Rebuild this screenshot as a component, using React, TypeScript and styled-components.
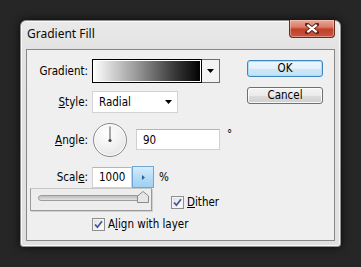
import styled, { createGlobalStyle } from 'styled-components';

const Global = createGlobalStyle`
  html, body { margin: 0; padding: 0; background: #262626; }
  body {
    width: 361px; height: 267px; overflow: hidden;
    font-family: "DejaVu Sans Condensed", "Liberation Sans", sans-serif;
    font-size: 11.5px; color: #000;
  }
`;

const Desktop = styled.div`
  padding: 20px 0 0 20px;
`;

const Window = styled.div`
  box-sizing: border-box;
  width: 321px;
  height: 227px;
  border: 1px solid #8f8f8f;
  border-radius: 6px 6px 3px 3px;
  background: linear-gradient(180deg, #eaeaea 0%, #e3e3e3 12%, #e0e0e0 100%);
  box-shadow: 0 0 10px rgba(0, 0, 0, 0.75), inset 0 0 0 1px rgba(255, 255, 255, 0.75);
  padding: 0 5px 5px;
  display: flex;
  flex-direction: column;
`;

const TitleBar = styled.div`
  height: 28px;
  display: flex;
  justify-content: space-between;
  align-items: flex-start;
`;

const Title = styled.div`
  margin: 5px 0 0 1px;
  font-family: "Noto Sans", "Open Sans", sans-serif;
  font-size: 12px;
  line-height: 16px;
  color: #0a0a0a;
`;

const CloseButton = styled.div`
  width: 46px;
  height: 18px;
  margin-top: -1px;
  box-sizing: border-box;
  border: 1px solid #6b2a1f;
  border-top: none;
  border-radius: 0 0 4px 4px;
  background: linear-gradient(180deg, #e9a89b 0%, #dc7d6a 40%, #c4402a 55%, #c65540 100%);
  box-shadow: inset 0 0 0 1px rgba(255, 220, 210, 0.45);
  display: flex;
  align-items: center;
  justify-content: center;
`;

const Frame = styled.div`
  flex: 1;
  border: 1px solid #888888;
  background: #efefef;
  display: flex;
  justify-content: space-between;
`;

const FormColumn = styled.div`
  display: flex;
  flex-direction: column;
`;

const Row = styled.div<{ $mt: number; $h?: number }>`
  display: flex;
  align-items: center;
  margin-top: ${(p) => p.$mt}px;
  height: ${(p) => (p.$h ? `${p.$h}px` : 'auto')};
`;

const Label = styled.div`
  width: 61px;
  margin-right: 4px;
  text-align: right;
  white-space: nowrap;
`;

const Key = styled.span`
  text-decoration: underline;
  text-underline-offset: 1px;
`;

const GradientPicker = styled.div`
  display: flex;
  width: 128px;
  height: 24px;
`;

const Swatch = styled.div`
  flex: 1;
  box-sizing: border-box;
  border: 1px solid #000;
  box-shadow: inset 0 0 0 1px #fff;
  background: linear-gradient(90deg, #ffffff 0%, #9a9a9a 40%, #3a3a3a 75%, #000000 100%);
`;

const PickerArrow = styled.div`
  width: 18px;
  box-sizing: border-box;
  border: 1px solid #6e6e6e;
  border-left: none;
  background: #f3f3f3;
  display: flex;
  align-items: center;
  justify-content: center;
`;

const Select = styled.div`
  box-sizing: border-box;
  width: 86px;
  height: 22px;
  border: 1px solid #d3d3d3;
  background: #fff;
  display: flex;
  align-items: center;
  justify-content: space-between;
  padding: 0 5px 0 6px;
`;

const Dial = styled.div`
  box-sizing: border-box;
  width: 34px;
  height: 34px;
  margin-left: 1px;
  border-radius: 50%;
  border: 1px solid #8a8a8a;
  background: radial-gradient(circle at 40% 30%, #ffffff 0%, #f2f2f2 45%, #dedede 100%);
  box-shadow: inset 0 0 0 1px rgba(255, 255, 255, 0.9);
`;

const TextInput = styled.div<{ $w: number; $ml?: number }>`
  box-sizing: border-box;
  width: ${(p) => p.$w}px;
  height: 21px;
  margin-left: ${(p) => p.$ml ?? 0}px;
  border: 1px solid #d0d0d0;
  border-top-color: #b5b5b5;
  background: #fff;
  display: flex;
  align-items: center;
  padding-left: 6px;
`;

const Unit = styled.div<{ $ml: number; $up?: boolean }>`
  margin-left: ${(p) => p.$ml}px;
  align-self: ${(p) => (p.$up ? 'flex-start' : 'center')};
  margin-top: ${(p) => (p.$up ? '5px' : '0')};
`;

const StepButton = styled.div`
  box-sizing: border-box;
  width: 22px;
  height: 22px;
  border: 1px solid #6fa6d3;
  background: linear-gradient(180deg, #d6ecfb 0%, #b5dcf7 50%, #9fd0f4 100%);
  display: flex;
  align-items: center;
  justify-content: center;
`;

const SliderRow = styled.div`
  display: flex;
  align-items: flex-end;
`;

const SliderPopup = styled.div`
  box-sizing: border-box;
  width: 122px;
  height: 23px;
  margin-left: 3px;
  border: 1px solid #9a9a9a;
  border-top-color: #c8c8c8;
  background: #ededed;
  box-shadow: 1px 1px 0 #cfcfcf;
  display: flex;
  align-items: center;
  padding-left: 7px;
`;

const Track = styled.div`
  position: relative;
  width: 109px;
  height: 4px;
  margin-top: -4px;
  border: 1px solid #9c9c9c;
  border-radius: 3px;
  background: linear-gradient(180deg, #bdbdbd, #e2e2e2);
`;

const Thumb = styled.svg`
  position: absolute;
  right: -1px;
  top: -5px;
`;

const Check = styled.label<{ $ml: number; $mb?: number }>`
  display: flex;
  align-items: center;
  gap: 3px;
  margin-left: ${(p) => p.$ml}px;
  margin-bottom: ${(p) => p.$mb ?? 0}px;
  white-space: nowrap;
`;

const Box = styled.div`
  box-sizing: border-box;
  width: 13px;
  height: 13px;
  border: 1px solid #8e8f8f;
  background: linear-gradient(135deg, #dcdcdc 0%, #f4f4f4 60%, #ffffff 100%);
  box-shadow: inset 0 0 0 1px #f4f4f4;
  display: flex;
  align-items: center;
  justify-content: center;
`;

const ButtonColumn = styled.div`
  display: flex;
  flex-direction: column;
  gap: 10px;
  margin: 10px 11px 0 0;
`;

const Button = styled.div<{ $default?: boolean }>`
  box-sizing: border-box;
  width: 76px;
  height: 17px;
  border: 1px solid ${(p) => (p.$default ? '#3c87c0' : '#707070')};
  border-radius: 3px;
  background: ${(p) =>
    p.$default
      ? 'linear-gradient(180deg, #eef7fd 0%, #e2f1fb 50%, #cde8f8 51%, #c2e2f6 100%)'
      : 'linear-gradient(180deg, #f3f3f3 0%, #ebebeb 50%, #dddddd 51%, #cfcfcf 100%)'};
  box-shadow: inset 0 0 0 1px ${(p) => (p.$default ? '#a9dcf7' : 'rgba(255,255,255,0.8)')};
  display: flex;
  align-items: center;
  justify-content: center;
  line-height: 13px;
`;

const CheckMark = () => (
  <svg width="9" height="9" viewBox="0 0 9 9">
    <path d="M1 4.5 L3.4 7.2 L8 1.2" fill="none" stroke="#45589a" strokeWidth="1.8" />
  </svg>
);

const DownArrow = () => (
  <svg width="7" height="4" viewBox="0 0 7 4">
    <path d="M0 0 H7 L3.5 4 Z" fill="#000" />
  </svg>
);

export default function App() {
  return (
    <>
      <Global />
      <Desktop>
        <Window>
          <TitleBar>
            <Title>Gradient Fill</Title>
            <CloseButton>
              <svg width="14" height="11" viewBox="0 0 14 11">
                <path d="M2 1.5 L12 9.5 M12 1.5 L2 9.5" stroke="#5a2418" strokeWidth="4" strokeLinecap="square" />
                <path d="M2.3 1.8 L11.7 9.2 M11.7 1.8 L2.3 9.2" stroke="#fff" strokeWidth="2.2" />
              </svg>
            </CloseButton>
          </TitleBar>
          <Frame>
            <FormColumn>
              <Row $mt={9} $h={24}>
                <Label>Gradient:</Label>
                <GradientPicker>
                  <Swatch />
                  <PickerArrow>
                    <DownArrow />
                  </PickerArrow>
                </GradientPicker>
              </Row>
              <Row $mt={8} $h={22}>
                <Label>
                  <Key>S</Key>tyle:
                </Label>
                <Select>
                  <span>Radial</span>
                  <DownArrow />
                </Select>
              </Row>
              <Row $mt={9} $h={35}>
                <Label>
                  <Key>A</Key>ngle:
                </Label>
                <Dial>
                  <svg width="32" height="32" viewBox="0 0 32 32">
                    <line x1="16" y1="2.5" x2="16" y2="16" stroke="#555" strokeWidth="1" />
                    <circle cx="16" cy="16.5" r="1.6" fill="#444" />
                  </svg>
                </Dial>
                <TextInput $w={84} $ml={9}>
                  90
                </TextInput>
                <Unit $ml={7} $up>
                  °
                </Unit>
              </Row>
              <Row $mt={9} $h={22}>
                <Label>
                  Scal<Key>e</Key>:
                </Label>
                <TextInput $w={40}>1000</TextInput>
                <StepButton>
                  <svg width="3" height="5" viewBox="0 0 3 5">
                    <path d="M0 0 L3 2.5 L0 5 Z" fill="#2f5f99" />
                  </svg>
                </StepButton>
                <Unit $ml={5}>%</Unit>
              </Row>
              <SliderRow>
                <SliderPopup>
                  <Track>
                    <Thumb width="12" height="12" viewBox="0 0 12 12">
                      <path d="M0.5 11.5 V5 L6 0.5 L11.5 5 V11.5 Z" fill="#e6e6e6" stroke="#8a8a8a" />
                    </Thumb>
                  </Track>
                </SliderPopup>
                <Check $ml={19} $mb={2}>
                  <Box>
                    <CheckMark />
                  </Box>
                  <span>
                    <Key>D</Key>ither
                  </span>
                </Check>
              </SliderRow>
              <Row $mt={6}>
                <Check $ml={65}>
                  <Box>
                    <CheckMark />
                  </Box>
                  <span>
                    A<Key>l</Key>ign with layer
                  </span>
                </Check>
              </Row>
            </FormColumn>
            <ButtonColumn>
              <Button $default>OK</Button>
              <Button>Cancel</Button>
            </ButtonColumn>
          </Frame>
        </Window>
      </Desktop>
    </>
  );
}
